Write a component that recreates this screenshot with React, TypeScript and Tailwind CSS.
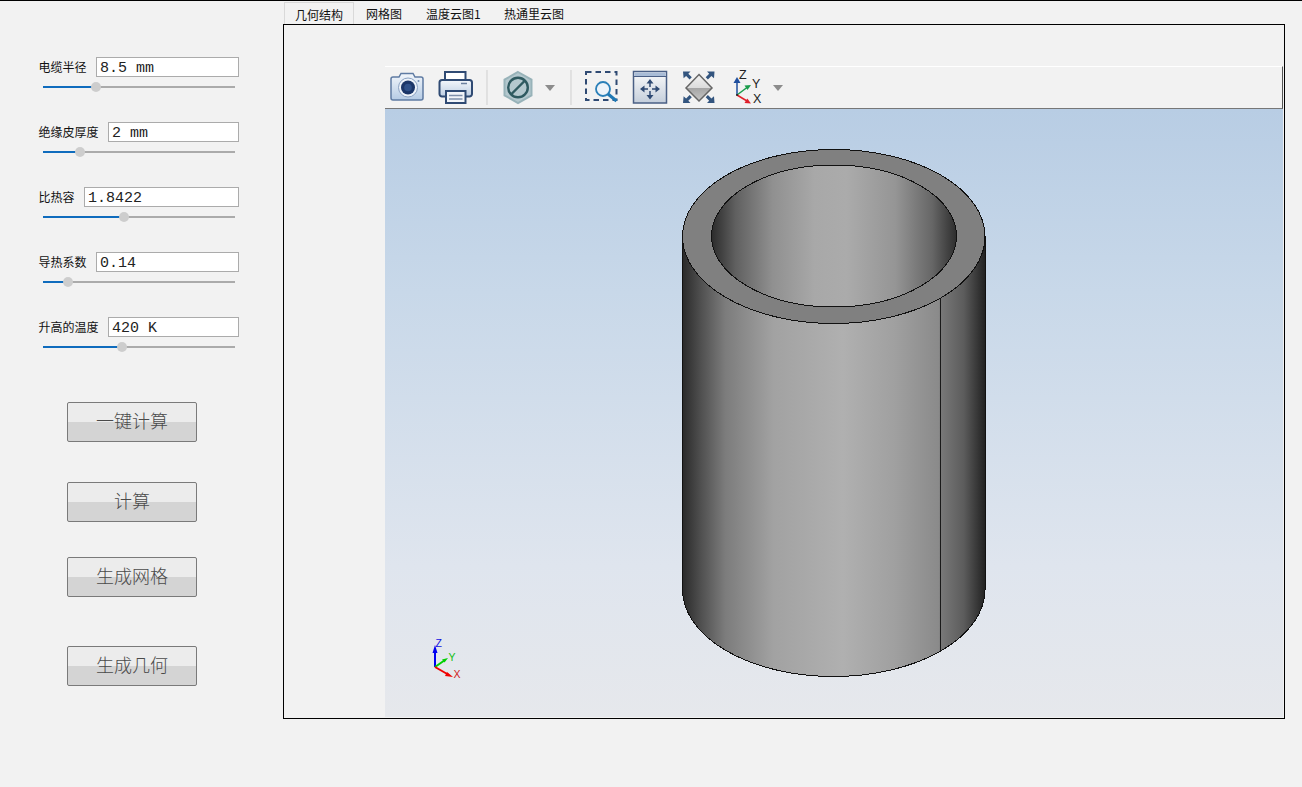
import React from "react";

const rows = [
  { label: "电缆半径", value: "8.5 mm", inputW: "w-[143px]", gap: "w-[58px]", pct: 53 },
  { label: "绝缘皮厚度", value: "2 mm", inputW: "w-[131px]", gap: "w-[70px]", pct: 37 },
  { label: "比热容", value: "1.8422", inputW: "w-[155px]", gap: "w-[46px]", pct: 81 },
  { label: "导热系数", value: "0.14", inputW: "w-[143px]", gap: "w-[58px]", pct: 25 },
  { label: "升高的温度", value: "420 K", inputW: "w-[131px]", gap: "w-[70px]", pct: 79 },
];

function Row({ r }: { r: (typeof rows)[number] }) {
  return (
    <div className="h-[65px]">
      <div className="-ml-px flex h-5 items-center">
        <div className={`${r.gap} pl-[0.5px] text-[12px] leading-5 text-[#111] font-['Noto_Sans_CJK_SC',sans-serif] whitespace-nowrap`}>{r.label}</div>
        <div className={`${r.inputW} h-5 border border-[#ababab] bg-white pt-[2px] pl-[3px] text-[15px] leading-[18px] text-[#222] font-['Liberation_Mono',monospace] whitespace-nowrap`}>
          {r.value}
        </div>
      </div>
      <div className="relative mt-[9px] ml-1 flex h-[2px] w-[192px] bg-[#ababab]">
        <div className="h-[2px] bg-[#0f6cbd]" style={{ width: r.pct }} />
        <div className="absolute top-[-4px] h-[10px] w-[10px] rounded-full bg-[#cdcdcd]" style={{ left: r.pct - 5 }} />
      </div>
    </div>
  );
}

function Btn({ text, cls }: { text: string; cls: string }) {
  return (
    <button className={`${cls} ml-7 block h-10 w-[130px] rounded-[2px] border border-[#7a7a7a] bg-[linear-gradient(#ececec_0,#ececec_50%,#d4d4d4_50%,#d4d4d4_100%)] pb-1 text-[18px] leading-[30px] text-[#4a4a4a] font-['Noto_Sans_CJK_SC',sans-serif] font-light`}>
      {text}
    </button>
  );
}

function Toolbar() {
  return (
    <svg width="440" height="41" viewBox="385 67 440 41" className="block shrink-0">
      <defs>
        <linearGradient id="cam" x1="0" y1="0" x2="0" y2="1">
          <stop offset="0" stopColor="#f2f6fb" />
          <stop offset="1" stopColor="#b5cbe4" />
        </linearGradient>
        <linearGradient id="prn" x1="0" y1="0" x2="0" y2="1">
          <stop offset="0" stopColor="#f4f7fb" />
          <stop offset="1" stopColor="#bccde2" />
        </linearGradient>
        <linearGradient id="fit" x1="0" y1="0" x2="0" y2="1">
          <stop offset="0" stopColor="#fbfbfb" />
          <stop offset="1" stopColor="#c4cedb" />
        </linearGradient>
        <linearGradient id="dia" x1="0" y1="0" x2="0" y2="1">
          <stop offset="0" stopColor="#f2f2f2" />
          <stop offset=".5" stopColor="#dcdcdc" />
          <stop offset=".5" stopColor="#a4a4a4" />
          <stop offset="1" stopColor="#c6c6c6" />
        </linearGradient>
      </defs>
      {/* camera */}
      <path d="M391 79a2 2 0 0 1 2-2h6l2-3.500h12l2 3.500h6a2 2 0 0 1 2 2v19a2 2 0 0 1-2 2h-28a2 2 0 0 1-2-2z" fill="url(#cam)" stroke="#5f7ba3" strokeWidth="1.500" />
      <circle cx="408" cy="87.500" r="9.500" fill="#eef3f9" stroke="#8ba2c2" />
      <circle cx="408" cy="87.500" r="7" fill="#1c3668" />
      <circle cx="408" cy="87.500" r="3.800" fill="#2f5088" />
      <circle cx="418.500" cy="81" r="1" fill="#6f8bb0" />
      {/* printer */}
      <path d="M445 81v-9h20.500v9" fill="#fff" stroke="#2f4a73" strokeWidth="2" />
      <path d="M446 96.500h-4a2.500 2.500 0 0 1-2.500-2.500V82.500a2.500 2.500 0 0 1 2.500-2.500h27.500a2.500 2.500 0 0 1 2.500 2.500V94a2.500 2.500 0 0 1-2.500 2.500h-4" fill="url(#prn)" stroke="#2f4a73" strokeWidth="2" />
      <path d="M446 91h19.500v12H446z" fill="#f2f5f9" stroke="#2f4a73" strokeWidth="2" />
      <path d="M449 95.500h13.500M449 99h13.500" stroke="#7f90aa" strokeWidth="1.300" />
      <path d="M461 83.500h6" stroke="#6c809f" strokeWidth="1.500" />
      <path d="M487 70v35M571 70v35" stroke="#cfcfcf" />
      {/* hexagon */}
      <path d="M518 72l13.500 7.700v15.600L518 103l-13.500-7.700V79.700z" fill="#b4c8ce" stroke="#98b3b9" strokeWidth="2" />
      <circle cx="518" cy="87.500" r="9.800" fill="#b4c8ce" stroke="#2f5a60" strokeWidth="2.400" />
      <path d="M511.500 94l13-13" stroke="#2f5a60" strokeWidth="2.400" />
      <path d="M545 85h10l-5 6z" fill="#8c8c8c" />
      {/* zoom window */}
      <rect x="586" y="72" width="30.500" height="28" fill="none" stroke="#2f4a73" strokeWidth="2" strokeDasharray="5.500 4" />
      <circle cx="603" cy="89" r="7" fill="#edf3f9" stroke="#2a7fb8" strokeWidth="1.800" />
      <path d="M608 94l8.500 7" stroke="#1f78b4" strokeWidth="3.200" />
      {/* fit window */}
      <rect x="633.500" y="71.500" width="33" height="31.500" fill="url(#fit)" stroke="#4a5f85" strokeWidth="1.500" />
      <rect x="634.500" y="72.500" width="31" height="3.500" fill="#a9bcd6" />
      <path d="M634 76.500h32" stroke="#4a5f85" />
      <path d="M650 83v4M650 91v4M644 89h4M652 89h4" stroke="#2f4a73" strokeWidth="1.500" />
      <path d="M650 79l-3.500 4.500h7zM650 99.500l-3.500-4.500h7zM640 89l4.500-3.500v7zM660 89l-4.500-3.500v7z" fill="#2f4a73" />
      {/* diamond */}
      <path d="M699 74.500l13 13.500-13 13-13-13z" fill="url(#dia)" stroke="#666" strokeWidth="1.500" />
      <path d="M683 71.500h7.500l-2.200 2.200 3.500 3.500-2.200 2.200-3.500-3.500-2.500 2.300zM714.500 71.500H707l2.200 2.200-3.500 3.500 2.200 2.200 3.500-3.500 2.600 2.300zM683 103h7.500l-2.200-2.200 3.500-3.500-2.200-2.200-3.500 3.500-2.500-2.300zM714.500 103H707l2.200-2.200-3.500-3.500 2.200-2.200 3.500 3.500 2.600-2.300z" fill="#33557f" />
      {/* axes */}
      <path d="M737 95V80" stroke="#1f4f9e" strokeWidth="1.500" />
      <path d="M737 77l-3.500 6h7z" fill="#1f4f9e" />
      <path d="M737 95l10-7.500" stroke="#1a9c4b" strokeWidth="1.500" />
      <path d="M751 85l-6.500.5 3 4.500z" fill="#1a9c4b" />
      <path d="M737 95l10 6" stroke="#e0202a" strokeWidth="1.500" />
      <path d="M751 103.500l-6.500-.5 2.800-4.500z" fill="#e0202a" />
      <circle cx="737" cy="95" r="1" fill="#222" />
      <text x="739" y="78.500" fontFamily="'Liberation Sans',sans-serif" fontSize="12.500" fill="#222">Z</text>
      <text x="752" y="87.500" fontFamily="'Liberation Sans',sans-serif" fontSize="12.500" fill="#222">Y</text>
      <text x="753" y="102.500" fontFamily="'Liberation Sans',sans-serif" fontSize="12.500" fill="#222">X</text>
      <path d="M773 85h10l-5 6z" fill="#8c8c8c" />
    </svg>
  );
}

function Scene() {
  return (
    <svg width="898" height="608" viewBox="385 109 898 608" className="block">
      <defs>
        <linearGradient id="body" gradientUnits="userSpaceOnUse" x1="683" y1="0" x2="985" y2="0">
          <stop offset="0" stopColor="#2b2b2b" />
          <stop offset="0.06" stopColor="#505050" />
          <stop offset="0.14" stopColor="#7c7c7c" />
          <stop offset="0.3" stopColor="#a2a2a2" />
          <stop offset="0.53" stopColor="#b0b0b0" />
          <stop offset="0.7" stopColor="#a0a0a0" />
          <stop offset="0.849" stopColor="#8a8a8a" />
          <stop offset="0.85" stopColor="#7a7a7a" />
          <stop offset="0.93" stopColor="#5c5c5c" />
          <stop offset="1" stopColor="#222222" />
        </linearGradient>
        <linearGradient id="inner" gradientUnits="userSpaceOnUse" x1="711" y1="0" x2="957" y2="0">
          <stop offset="0" stopColor="#2a2a2a" />
          <stop offset="0.1" stopColor="#606060" />
          <stop offset="0.25" stopColor="#909090" />
          <stop offset="0.42" stopColor="#a8a8a8" />
          <stop offset="0.55" stopColor="#ababab" />
          <stop offset="0.75" stopColor="#959595" />
          <stop offset="0.9" stopColor="#666666" />
          <stop offset="1" stopColor="#2c2c2c" />
        </linearGradient>
      </defs>
      <path d="M682.500 236V589.500A151.250 87 0 0 0 985 589.500V236Z" fill="url(#body)" />
      <path d="M682.500 236V589.500A151.250 87 0 0 0 985 589.500V236" fill="none" stroke="#111" strokeWidth="1" shapeRendering="crispEdges" />
      <path d="M940.500 297V652" stroke="#1a1a1a" strokeWidth="1" shapeRendering="crispEdges" />
      <ellipse cx="833.750" cy="236.500" rx="151.250" ry="87" fill="#808080" stroke="#111" strokeWidth="1" shapeRendering="crispEdges" />
      <ellipse cx="834" cy="236" rx="122.500" ry="71" fill="url(#inner)" stroke="#111" strokeWidth="1" shapeRendering="crispEdges" />
      {/* triad */}
      <path d="M435 667V648" stroke="#0000f0" strokeWidth="2" />
      <path d="M435 645l-2.500 8h5z" fill="#0000f0" />
      <path d="M435 667l10-7" stroke="#00d000" strokeWidth="2" />
      <path d="M448 658l-6 1.500 2.500 3z" fill="#00d000" />
      <path d="M435 667l14 8" stroke="#f00000" strokeWidth="2" />
      <path d="M453 677l-6-5-2 4z" fill="#f00000" />
      <text x="435.500" y="647" fontFamily="'Liberation Sans',sans-serif" fontSize="10.500" fill="#1010e0">Z</text>
      <text x="448.500" y="660.500" fontFamily="'Liberation Sans',sans-serif" fontSize="10.500" fill="#10c010">Y</text>
      <text x="453.500" y="678" fontFamily="'Liberation Sans',sans-serif" fontSize="10.500" fill="#d02020">X</text>
    </svg>
  );
}

export default function App() {
  const tab = "text-[12px] leading-[23px] text-[#111] font-['Noto_Sans_CJK_SC',sans-serif] whitespace-nowrap";
  return (
    <div className="h-[787px] w-[1302px] overflow-hidden border-t border-black bg-[#f2f2f2]">
      <div className="flex">
        <div className="w-[283px] shrink-0 pt-[56px] pl-[39px]">
          {rows.map((r) => (
            <Row key={r.label} r={r} />
          ))}
          <Btn text="一键计算" cls="mt-5" />
          <Btn text="计算" cls="mt-10" />
          <Btn text="生成网格" cls="mt-[35px]" />
          <Btn text="生成几何" cls="mt-[49px]" />
        </div>
        <div className="w-[1002px] shrink-0 pt-[1px]">
          <div className="flex h-[22px]">
            <div className={`${tab} ml-px w-[70px] border border-b-0 border-[#d9d9d9] pl-[10px]`}>几何结构</div>
            <div className={`${tab} w-[73px] pl-3`}>网格图</div>
            <div className={`${tab} -ml-px w-[78px]`}>温度云图1</div>
            <div className={tab}>热通里云图</div>
          </div>
          <div className="h-[695px] border border-black pt-[41px] pl-[101px]">
            <div className="flex h-[43px] w-[898px] border-t border-r border-b border-t-white border-r-[#555] border-b-[#777] bg-[#f2f2f2]">
              <Toolbar />
            </div>
            <div className="h-[608px] w-[898px] bg-[linear-gradient(#b8cde4,#c8d8e9_30%,#dfe5ee_75%,#e6e8ec)]">
              <Scene />
            </div>
          </div>
        </div>
      </div>
    </div>
  );
}
